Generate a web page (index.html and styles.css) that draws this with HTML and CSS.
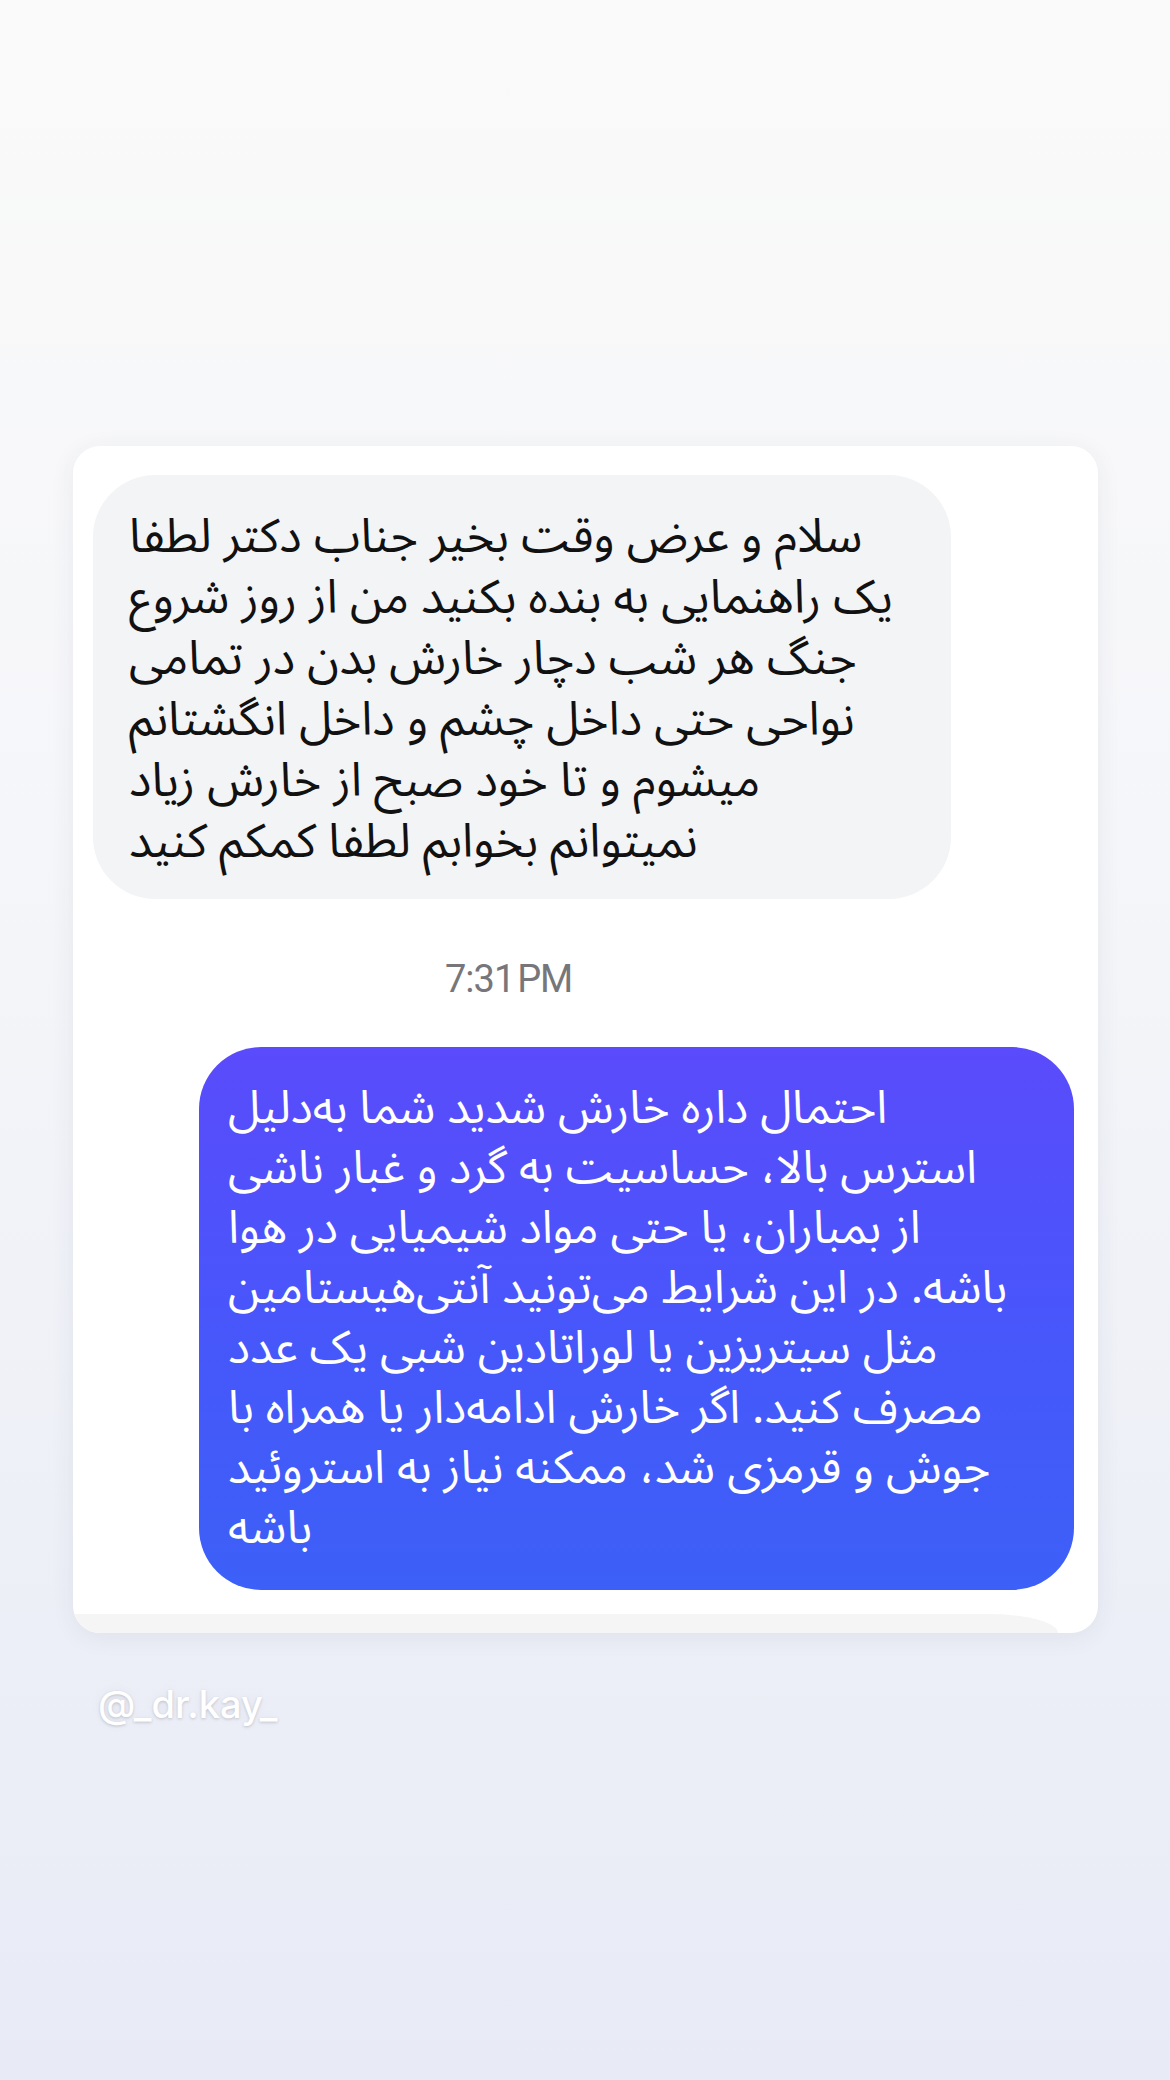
FILE: index.html
```html
<!DOCTYPE html>
<html lang="fa">
<head>
  <meta charset="UTF-8" />
  <meta name="viewport" content="width=device-width, initial-scale=1.0"/>
  <title>Chat - dr.kay</title>
  <link rel="stylesheet" href="styles.css">
</head>
<body>
  <div class="story">
    <div class="chat-card">
      <div class="bubble bubble-in" dir="rtl">
        سلام و عرض وقت بخیر جناب دکتر لطفا<br>
        یک راهنمایی به بنده بکنید من از روز شروع<br>
        جنگ هر شب دچار خارش بدن در تمامی<br>
        نواحی حتی داخل چشم و داخل انگشتانم<br>
        میشوم و تا خود صبح از خارش زیاد<br>
        نمیتوانم بخوابم لطفا کمکم کنید
      </div>
      <div class="msg-time">7:31&#8202;PM</div>
      <div class="bubble bubble-out" dir="rtl">
        احتمال داره خارش شدید شما به‌دلیل<br>
        استرس بالا، حساسیت به گرد و غبار ناشی<br>
        از بمباران، یا حتی مواد شیمیایی در هوا<br>
        باشه. در این شرایط می‌تونید آنتی‌هیستامین<br>
        مثل سیتریزین یا لوراتادین شبی یک عدد<br>
        مصرف کنید. اگر خارش ادامه‌دار یا همراه با<br>
        جوش و قرمزی شد، ممکنه نیاز به استروئید<br>
        باشه
      </div>
      <div class="next-peek"></div>
    </div>
    <div class="handle">@_dr.kay_</div>
  </div>
</body>
</html>
```

FILE: styles.css
```css
body {
  margin: 0;
  min-height: 2080px;
  background: linear-gradient(180deg, #fafafa 0%, #f5f6f9 40%, #e8ebf6 100%);
  font-family: "Noto Sans Arabic", "DejaVu Sans", sans-serif;
}
.story {
  padding: 446px 72px 0 73px;
}
.chat-card {
  background: #fff;
  border-radius: 27px;
  box-shadow: 0 4px 24px rgba(40, 50, 90, 0.07);
  padding: 29px 24px 0 20px;
  overflow: hidden;
}
.bubble {
  border-radius: 62px;
  font-size: 47px;
  line-height: 61px;
  text-align: left;
  white-space: nowrap;
}
.bubble-in {
  width: 858px;
  box-sizing: border-box;
  background: #f3f4f6;
  color: #111;
  padding: 32px 20px 26px 36px;
}
.msg-time {
  font-family: Roboto, "Liberation Sans", sans-serif;
  font-size: 38px;
  color: #76767b;
  padding-left: 352px;
  margin: 58px 0 46px 0;
  line-height: 44px;
  letter-spacing: -1px;
}
.bubble-out {
  margin-left: 106px;
  font-size: 46px;
  background: linear-gradient(180deg, #5a4bfb 0%, #4856fa 50%, #3c60f7 100%);
  color: #fff;
  padding: 32px 20px 31px 29px;
  line-height: 60px;
}
.next-peek {
  height: 19px;
  margin: 24px -24px 0 -20px;
  background: #f5f5f6;
  border-top-right-radius: 70px 19px;
  width: 985px;
}
.handle {
  font-family: Inter, "Liberation Sans", sans-serif;
  font-size: 38px;
  font-weight: 500;
  color: #fff;
  margin: 48px 0 0 25px;
  text-shadow: 0 1px 3px rgba(0, 0, 0, 0.18), 0 0 12px rgba(0, 0, 0, 0.05);
}
```
